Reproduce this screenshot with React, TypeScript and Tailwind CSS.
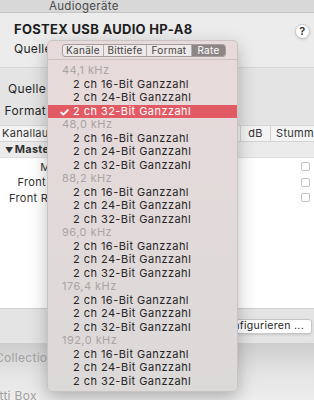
import React from 'react';

const groups = ['44,1 kHz', '48,0 kHz', '88,2 kHz', '96,0 kHz', '176,4 kHz', '192,0 kHz'];
const depths = ['16', '24', '32'];
const tabs = ['Kanäle', 'Bittiefe', 'Format', 'Rate'];

function RateMenu() {
  return (
    <div className="absolute left-[47px] top-[40px] w-[191px] h-[352px] rounded-[5px] bg-gradient-to-b from-[#e8dadb] to-[#dcd9d9] border border-[#c9c3c3] shadow-[0_6px_18px_rgba(0,0,0,0.25)] overflow-hidden">
      <div className="flex h-[17px] items-center pl-[14px] pt-[2px]">
        <div className="flex h-[13px] rounded-[3px] border border-[#a49e9e] bg-[#efe9e9] overflow-hidden">
          {tabs.map((t, i) => (
            <div
              key={t}
              className={
                i === 3
                  ? 'flex items-center justify-center w-[33px] bg-[#8d8586] text-white text-[10px] tracking-[0.3px]'
                  : 'flex items-center justify-center border-r border-[#b3adad] text-[#444] text-[10px] tracking-[0.3px] ' +
                    (i === 0 ? 'w-[41px]' : i === 1 ? 'w-[43px]' : 'w-[45px]')
              }
            >
              {t}
            </div>
          ))}
        </div>
      </div>
      <div className="mt-[1px] h-px bg-[#cbc4c4]" />
      <div className="pt-[4px]">
        {groups.map((g, gi) => (
          <div key={g}>
            <div className="h-[13.5px] flex items-center pl-[14px] text-[11px] tracking-[0.45px] leading-[13px] text-[#aaa4a4]">{g}</div>
            {depths.map((d, di) => {
              const sel = gi === 0 && di === 2;
              return (
                <div
                  key={d}
                  className={
                    'h-[13.5px] flex items-center text-[11px] tracking-[0.45px] leading-[13px] ' +
                    (sel ? 'bg-[#e25a64] text-white' : 'text-[#262626]')
                  }
                >
                  <span className="w-[25px] pl-[11px] text-[12px] font-bold">{sel ? '✓' : ''}</span>
                  <span>2 ch {d}-Bit Ganzzahl</span>
                </div>
              );
            })}
          </div>
        ))}
      </div>
    </div>
  );
}

export default function App() {
  return (
    <div className="relative w-[314px] h-[400px] overflow-hidden bg-[#ececec] font-['Inter',sans-serif] text-[12px] tracking-[0.3px] text-[#262626]">
      {/* title bar */}
      <div className="h-[13px] bg-[#d8d8d8] border-b border-[#c4c4c4] pl-[49px] flex items-center text-[11.5px] text-[#4b4b4b] leading-[12px]">
        Audiogeräte
      </div>

      {/* device header */}
      <div className="h-[55px] bg-[#ececec] border-b border-[#d6d6d6] px-[14px] pt-[9px] relative">
        <div className="font-bold text-[13px] tracking-[0.3px] leading-[15px] text-[#1e1e1e]">FOSTEX USB AUDIO HP-A8</div>
        <div className="mt-[4px] leading-[15px]">Quelle</div>
        <div className="absolute right-[4px] top-[11px] w-[15px] h-[15px] rounded-full bg-white border border-[#c8c8c8] shadow-sm flex items-center justify-center text-[11px] font-semibold text-[#333]">
          ?
        </div>
      </div>

      {/* settings */}
      <div className="bg-[#e4e4e4]">
        <div className="h-[57px] pt-[13px] flex flex-col gap-[7px]">
          <div className="w-[46px] text-right leading-[15px]">Quelle</div>
          <div className="w-[46px] text-right leading-[15px]">Format</div>
        </div>

        {/* table */}
        <div className="flex h-[17px] items-center bg-[#f4f4f4] border-y border-[#d4d4d4] text-[11px] text-[#333]">
          <div className="w-[254px] pl-[2px]">Kanallautstärke</div>
          <div className="w-[32px] border-l border-[#d4d4d4] text-center">dB</div>
          <div className="flex-1 border-l border-[#d4d4d4] pl-[5px]">Stumm</div>
        </div>
        <div className="h-[16px] flex items-center bg-[#ebebeb] border-b border-[#dcdcdc] pl-[5px] font-bold text-[#333] text-[11px]">
          <span className="text-[8px] mr-[1px]">▼</span>Master-Stream
        </div>
        <div className="h-[150px] bg-white pt-[1px]">
          {['Master', 'Front Links', 'Front Rechts'].map((n) => (
            <div key={n} className="h-[15.5px] flex items-center">
              <div className="w-[78px] text-right text-[#333] text-[11px]">{n}</div>
              <div className="flex-1" />
              <div className="w-[9px] h-[9px] rounded-[2px] border border-[#c4c4c4] bg-white mr-[4px]" />
            </div>
          ))}
        </div>

        {/* bottom bar */}
        <div className="h-[35px] bg-[#e4e4e4] border-t border-[#d0d0d0] flex items-center justify-end pr-[2px]">
          <div className="h-[15px] px-[7px] rounded-[3px] bg-white border border-[#c6c6c6] shadow-sm flex items-center text-[10.5px] text-[#262626]">
            Konfigurieren ...
          </div>
        </div>
      </div>

      {/* window behind */}
      <div className="h-[60px] bg-gradient-to-b from-[#cdcdcd] via-[#e4e4e4] to-[#efefef] text-[#a2a2a2] text-[12px]">
        <div className="pt-[6px] -ml-[5px]">Collection</div>
        <div className="mt-[20px] -ml-[35px]">Konfetti Box</div>
      </div>

      <RateMenu />
    </div>
  );
}
